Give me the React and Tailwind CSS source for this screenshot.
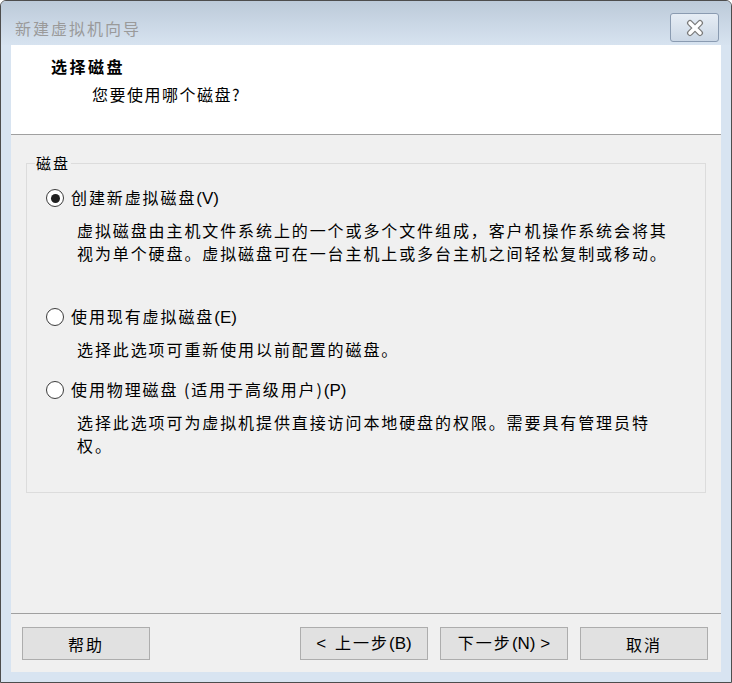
import React, { useState } from "react";

const cjk = '"Noto Sans CJK SC", "Liberation Sans", sans-serif';
const latin = '"Liberation Sans", sans-serif';

const options = [
  {
    id: "new",
    label: "创建新虚拟磁盘",
    key: "V",
    desc: [
      "虚拟磁盘由主机文件系统上的一个或多个文件组成，客户机操作系统会将其",
      "视为单个硬盘。虚拟磁盘可在一台主机上或多台主机之间轻松复制或移动。",
    ],
  },
  {
    id: "existing",
    label: "使用现有虚拟磁盘",
    key: "E",
    desc: ["选择此选项可重新使用以前配置的磁盘。"],
  },
  {
    id: "physical",
    label: "使用物理磁盘 (适用于高级用户)",
    key: "P",
    desc: [
      "选择此选项可为虚拟机提供直接访问本地硬盘的权限。需要具有管理员特",
      "权。",
    ],
  },
];

const Radio = ({ checked }) => (
  <span className="flex h-[18px] w-[18px] shrink-0 items-center justify-center rounded-full border-[1.5px] border-[#3c3c3c] bg-white">
    {checked && <span className="h-[9px] w-[9px] rounded-full bg-[#1f1f1f]" />}
  </span>
);

const Button = ({ children }) => (
  <button className="h-[33px] w-[128px] border border-[#adadad] bg-[#e1e1e1] text-[16px] tracking-[2px] text-black">
    {children}
  </button>
);

const App = () => {
  const [selected, setSelected] = useState("new");

  return (
    <div
      className="flex h-[683px] w-[732px] flex-col overflow-hidden rounded-t-[6px] border border-[#4d4d4d] bg-[#d8e4f1]"
      style={{ fontFamily: cjk }}
    >
      {/* title bar */}
      <div className="flex h-[44px] shrink-0 items-start justify-between bg-gradient-to-b from-[#bccad9] to-[#d7e3f0] pl-[14px] pr-[12px] pt-[12px]">
        <span className="mt-[4px] text-[16px] leading-[22px] tracking-[2px] text-[#9a9a9a]">新建虚拟机向导</span>
        <button className="flex h-[29px] w-[49px] items-center justify-center rounded-[3px] border border-[#8a9bb1] bg-gradient-to-b from-[#e6edf5] to-[#cbd7e5]">
          <svg width="20" height="18" viewBox="0 0 20 18">
            <path d="M5 4 L15 14 M15 4 L5 14" stroke="#7b7b7b" strokeWidth="6" strokeLinecap="round" />
            <path d="M5 4 L15 14 M15 4 L5 14" stroke="#ffffff" strokeWidth="3.6" strokeLinecap="round" />
          </svg>
        </button>
      </div>

      {/* client */}
      <div className="mx-[10px] flex flex-1 flex-col bg-[#f0f0f0] text-black">
        <div className="h-[90px] shrink-0 border-b border-[#a0a0a0] bg-white pl-[40px] pt-[10px]">
          <div className="text-[16px] font-bold leading-[22px] tracking-[2.5px]">选择磁盘</div>
          <div className="ml-[41px] mt-[6px] text-[16px] leading-[22px] tracking-[1.5px]">您要使用哪个磁盘?</div>
        </div>

        <div className="flex-1 px-[15px] pt-[18px]">
          <fieldset className="h-[340px] border border-[#dcdcdc] px-[8px] pb-0 pt-[13px]">
            <legend className="px-[1px] text-[15px] leading-[20px] tracking-[2px]">磁盘</legend>
            {options.map((opt, i) => (
              <div key={opt.id} className={i === 0 ? "ml-[11px]" : i === 1 ? "ml-[11px] mt-[40px]" : "ml-[11px] mt-[17px]"}>
                <label
                  className="flex h-[24px] cursor-default items-center gap-[7px]"
                  onClick={() => setSelected(opt.id)}
                >
                  <Radio checked={selected === opt.id} />
                  <span className="text-[16px] tracking-[1.9px]">
                    {opt.label}
                    <span style={{ fontFamily: latin }} className="text-[17px] tracking-normal">
                      ({opt.key})
                    </span>
                  </span>
                </label>
                <div className="ml-[31px] mt-[9px] text-[16px] leading-[23px] tracking-[1.9px]">
                  {opt.desc.map((line) => (
                    <div key={line}>{line}</div>
                  ))}
                </div>
              </div>
            ))}
          </fieldset>
        </div>

        <div className="flex h-[59px] shrink-0 items-start justify-between border-t border-[#a0a0a0] pl-[11px] pr-[13px] pt-[13px]">
          <Button>帮助</Button>
          <div className="flex gap-[12px]">
            <Button>
              <span style={{ fontFamily: latin }} className="text-[17px]">&lt; </span>上一步
              <span style={{ fontFamily: latin }} className="text-[17px] tracking-normal">(B)</span>
            </Button>
            <Button>
              下一步
              <span style={{ fontFamily: latin }} className="text-[17px] tracking-normal">(N) &gt;</span>
            </Button>
            <Button>取消</Button>
          </div>
        </div>
      </div>

      <div className="h-[10px] shrink-0" />
    </div>
  );
};

export default App;
